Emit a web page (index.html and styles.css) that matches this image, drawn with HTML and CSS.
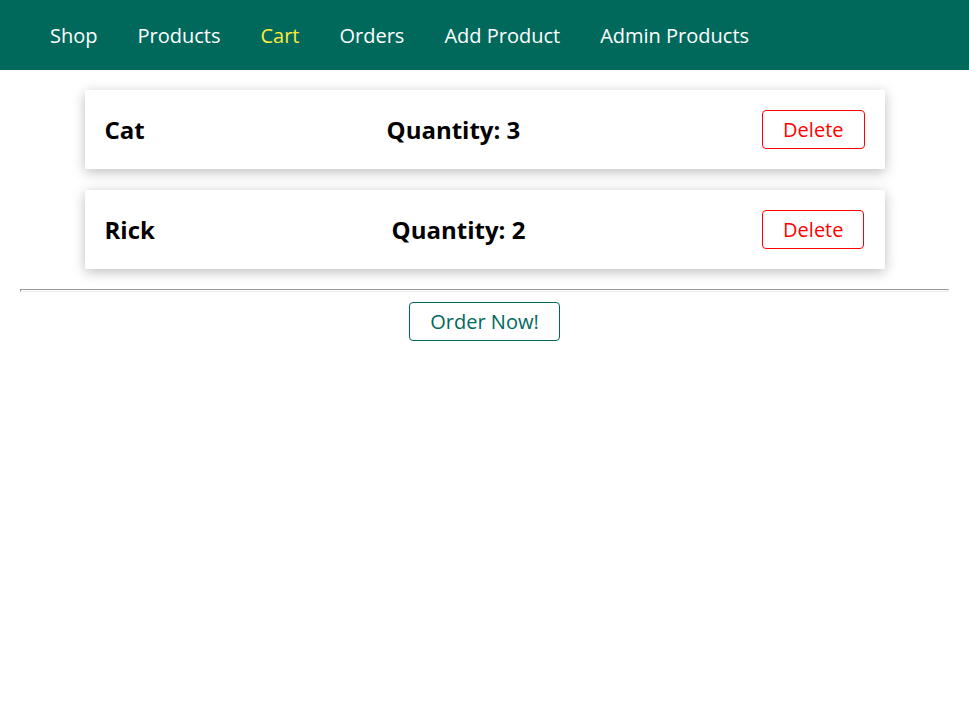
FILE: index.html
```html
<!DOCTYPE html>
<html lang="en">
<head>
<meta charset="UTF-8">
<meta name="viewport" content="width=device-width, initial-scale=1.0">
<title>Your Cart</title>
<link rel="stylesheet" href="styles.css">
</head>
<body>
<header class="main-header">
  <nav class="main-header__nav">
    <ul class="main-header__item-list">
      <li><a href="#">Shop</a></li>
      <li><a href="#">Products</a></li>
      <li><a class="active" href="#">Cart</a></li>
      <li><a href="#">Orders</a></li>
      <li><a href="#">Add Product</a></li>
      <li><a href="#">Admin Products</a></li>
    </ul>
  </nav>
</header>
<main>
  <ul class="cart__item-list">
    <li class="cart__item">
      <h1>Cat</h1>
      <h2>Quantity: 3</h2>
      <form><button class="btn danger" type="button">Delete</button></form>
    </li>
    <li class="cart__item">
      <h1>Rick</h1>
      <h2>Quantity: 2</h2>
      <form><button class="btn danger" type="button">Delete</button></form>
    </li>
  </ul>
  <hr>
  <div class="centered">
    <form><button class="btn" type="button">Order Now!</button></form>
  </div>
</main>
</body>
</html>
```
FILE: styles.css
```css
* {
  box-sizing: border-box;
}

body {
  margin: 0;
  font-family: "Open Sans", sans-serif;
  font-size: 20px;
  background: #fff;
}

.main-header {
  background: #00695c;
  height: 70px;
  padding: 0 30px;
}

.main-header__nav {
  height: 100%;
  display: flex;
  align-items: center;
}

.main-header__item-list {
  list-style: none;
  margin: 0;
  padding: 0;
  display: flex;
}

.main-header__item-list li {
  padding: 0 20px;
}

.main-header__item-list a {
  color: #fff;
  text-decoration: none;
}

.main-header__item-list a.active {
  color: #ffeb3b;
}

main {
  padding: 20px;
}

.cart__item-list {
  list-style: none;
  display: flex;
  flex-direction: column;
  gap: 21px;
  margin: 0 auto 20px;
  padding: 0;
  width: 800px;
  max-width: 100%;
}

.cart__item {
  display: flex;
  justify-content: space-between;
  align-items: center;
  padding: 20px;
  box-shadow: 0 3px 12px rgba(0, 0, 0, 0.26);
}

.cart__item h1,
.cart__item h2 {
  margin: 0;
  font-size: 24px;
  line-height: 32px;
}

hr {
  height: 3px;
  margin: 10px 0;
}

.btn {
  display: block;
  padding: 5px 20px;
  border: 1px solid #00695c;
  border-radius: 4px;
  background: transparent;
  color: #00695c;
  font: inherit;
  cursor: pointer;
}

.btn.danger {
  color: red;
  border-color: red;
}

.centered {
  text-align: center;
}

.centered form {
  display: inline-block;
}
```
